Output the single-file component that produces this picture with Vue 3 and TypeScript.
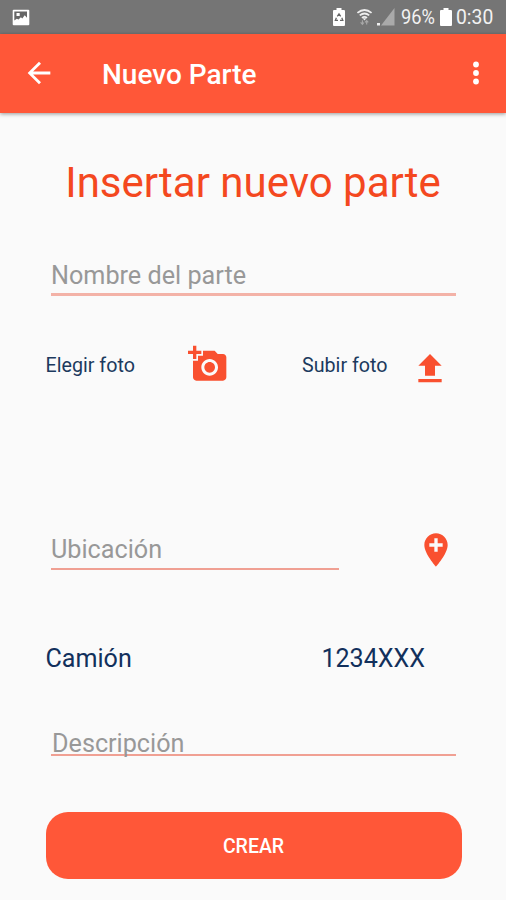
<script setup lang="ts">
import { ref } from 'vue'

const nombre = ref('')
const ubicacion = ref('')
const descripcion = ref('')
const camion = ref('1234XXX')
</script>

<template>
  <div class="screen">
    <div class="status">
      <svg class="picture" viewBox="0 0 18 17">
        <rect x="0.7" y="0.7" width="16.6" height="15.6" rx="1" fill="#fff" />
        <path d="M2.300 2.500H15v6.200l-2.300-2.500-2.400 3.300-1.400-1.200-2.400 2.300-1.700-.8-2.500 1.600z" fill="#666" />
        <rect x="4.500" y="4" width="3.200" height="3" fill="#fff" />
      </svg>
      <div class="indicators">
        <svg class="recycle" viewBox="0 0 12 18">
          <path d="M3.500 2V0h5v2h2.200c.8 0 1.300.5 1.300 1.300v13.400c0 .8-.5 1.300-1.300 1.300H1.300C.5 18 0 17.500 0 16.700V3.300C0 2.500.5 2 1.300 2z" fill="#fff" />
          <path d="M4.300 8.300L6 5.800l1.700 2.500M8.800 9.800l1 2.500H7M5 12.300H2.400l1-2.500" fill="none" stroke="#666" stroke-width="1.300" />
        </svg>
        <svg class="wifi" viewBox="0 0 18 18">
          <g fill="none" stroke="#eee" stroke-width="1.900">
            <path d="M1.500 4.600q7.500-6 15 0" />
            <path d="M4 7.300q5-4 10 0" />
            <path d="M6.300 9.900q2.700-2.100 5.400 0" />
          </g>
          <path d="M7 10.300h4l-2 2.400z" fill="#eee" />
          <path d="M6.800 12.500v4M4.900 14.800l1.900 2 1.500-2M11.300 17v-4M9.600 14.800l1.700-2 1.700 2" fill="none" stroke="#a8a8a8" stroke-width="1.200" />
        </svg>
        <svg class="signal" viewBox="0 0 18 18">
          <path d="M17.500 0v17.500H4z" fill="#aaa" />
          <rect x="0" y="15" width="3" height="2.500" fill="#eee" />
        </svg>
        <span class="percent">96%</span>
        <svg class="battery" viewBox="0 0 12 18">
          <path d="M3.500 2V0h5v2h2.200c.8 0 1.300.5 1.300 1.300v13.400c0 .8-.5 1.300-1.300 1.300H1.300C.5 18 0 17.500 0 16.700V3.300C0 2.500.5 2 1.300 2z" fill="#fff" />
        </svg>
        <span class="clock">0:30</span>
      </div>
    </div>

    <header class="appbar">
      <svg class="bar-icon" viewBox="0 0 24 24"><path d="M20 11H7.830l5.590-5.590L12 4l-8 8 8 8 1.410-1.410L7.830 13H20v-2z" /></svg>
      <span class="bar-title">Nuevo Parte</span>
      <svg class="bar-icon" viewBox="0 0 24 24">
        <circle cx="12" cy="6" r="2.050" /><circle cx="12" cy="12" r="2.050" /><circle cx="12" cy="18" r="2.050" />
      </svg>
    </header>

    <main class="form">
      <h1>Insertar nuevo parte</h1>

      <input v-model="nombre" class="field nombre" placeholder="Nombre del parte" />

      <div class="photos">
        <span class="elegir">Elegir foto</span>
        <svg class="icon camera" viewBox="0 0 24 24">
          <path d="M3 4V1h2v3h3v2H5v3H3V6H0V4h3zm3 6V7h3V4h7l1.830 2H21c1.100 0 2 .9 2 2v12c0 1.100-.9 2-2 2H5c-1.100 0-2-.9-2-2V10h3zm7 9c2.760 0 5-2.240 5-5s-2.240-5-5-5-5 2.240-5 5 2.240 5 5 5zm-3.200-5c0 1.770 1.430 3.200 3.200 3.200s3.200-1.430 3.200-3.200-1.430-3.200-3.200-3.200-3.200 1.430-3.200 3.200z" />
        </svg>
        <span class="subir">Subir foto</span>
        <svg class="icon upload" viewBox="0 0 24 24"><path d="M9 16h6v-6h4l-7-7-7 7h4zm-4 2h14v2H5z" /></svg>
      </div>

      <div class="location">
        <input v-model="ubicacion" class="field ubicacion" placeholder="Ubicación" />
        <svg class="icon pin" viewBox="0 0 24 24">
          <path d="M12 2C8.140 2 5 5.140 5 9c0 5.250 7 13 7 13s7-7.750 7-13c0-3.860-3.140-7-7-7zm4 8h-3v3h-2v-3H8V8h3V5h2v3h3v2z" />
        </svg>
      </div>

      <div class="truck">
        <span class="label">Camión</span>
        <span class="plate">{{ camion }}</span>
      </div>

      <input v-model="descripcion" class="field descripcion" placeholder="Descripción" />

      <button class="create" type="button">CREAR</button>
    </main>
  </div>
</template>

<style>
body {
  margin: 0;
  background: #fafafa;
}
</style>

<style scoped>
.screen {
  width: 506px;
  height: 900px;
  overflow: hidden;
  background: #fafafa;
  font-family: Roboto, "Liberation Sans", sans-serif;
}
.status {
  height: 34px;
  box-sizing: border-box;
  padding: 0 12px;
  display: flex;
  align-items: center;
  justify-content: space-between;
  background: #757575;
}
.picture {
  width: 18px;
  height: 17px;
}
.indicators {
  display: flex;
  align-items: center;
  color: #f2f2f2;
  font-size: 21px;
  line-height: 36px;
}
.recycle {
  width: 12px;
  height: 18px;
  margin-right: 11px;
}
.wifi {
  width: 17px;
  height: 18px;
  margin-right: 4px;
}
.signal {
  width: 18px;
  height: 18px;
  margin-right: 6px;
}
.percent,
.clock {
  transform-origin: 0 50%;
}
.percent {
  width: 39px;
  transform: scaleX(0.87);
}
.battery {
  width: 12px;
  height: 18px;
  margin-right: 4px;
}
.clock {
  width: 38px;
  transform: scaleX(0.92);
}
.appbar {
  height: 79px;
  box-sizing: border-box;
  padding: 0 13px 1px 22px;
  display: flex;
  align-items: center;
  background: #ff5738;
  box-shadow: 0 1px 4px rgba(0, 0, 0, 0.4);
}
.bar-icon {
  width: 34px;
  height: 34px;
  fill: #fff;
}
.bar-title {
  flex: 1;
  margin-left: 46px;
  padding-top: 3px;
  color: #fff;
  font-size: 28px;
  font-weight: 500;
  line-height: 34px;
}
.form {
  padding: 0 45px;
  display: flex;
  flex-direction: column;
}
h1 {
  margin: 44px 0 0;
  font-size: 42px;
  line-height: 52px;
  font-weight: 400;
  text-align: center;
  white-space: nowrap;
  color: #f4481f;
}
.field {
  box-sizing: border-box;
  margin: 0 0 0 6px;
  padding: 0;
  width: 405px;
  border: 0;
  border-bottom: 2px solid #f0a093;
  border-radius: 0;
  outline: 0;
  background: transparent;
  font: 400 25.200px/36px Roboto, "Liberation Sans", sans-serif;
  color: #12305c;
}
.field::placeholder {
  color: #989898;
  opacity: 1;
}
.nombre {
  height: 38px;
  margin-top: 49px;
  border-bottom: 3px solid #f3b2a7;
}
.photos {
  height: 40px;
  margin-top: 48px;
  display: flex;
  align-items: flex-start;
  color: #1c3a5e;
  font-size: 19.700px;
  line-height: 43px;
}
.icon {
  width: 40px;
  height: 40px;
  flex: none;
  fill: #f9502f;
}
.elegir {
  width: 142.500px;
  margin-left: 0.500px;
}
.subir {
  margin-left: 74px;
  width: 108px;
}
.upload {
  margin-top: 5px;
}
.location {
  height: 40px;
  margin-top: 146px;
  display: flex;
}
.ubicacion {
  width: 288px;
  height: 40px;
}
.pin {
  margin-left: 76.500px;
}
.truck {
  margin-top: 71px;
  padding: 0 36px 0 0.500px;
  display: flex;
  justify-content: space-between;
  font-size: 25.100px;
  line-height: 36px;
  color: #12305c;
}
/* The underline sits just below the text baseline, so descenders cross it. */
.descripcion {
  height: 36px;
  margin-top: 49px;
  padding-left: 1px;
  border-bottom: 0;
  background: linear-gradient(#f0a093, #f0a093) 0 28px / 100% 2px no-repeat;
}
.create {
  width: 416px;
  height: 67px;
  margin: 50px 0 0 0.500px;
  border: 0;
  border-radius: 22px;
  background: #ff5738;
  color: #fff;
  font: 500 19.500px/69px Roboto, "Liberation Sans", sans-serif;
  padding: 0;
}
</style>
